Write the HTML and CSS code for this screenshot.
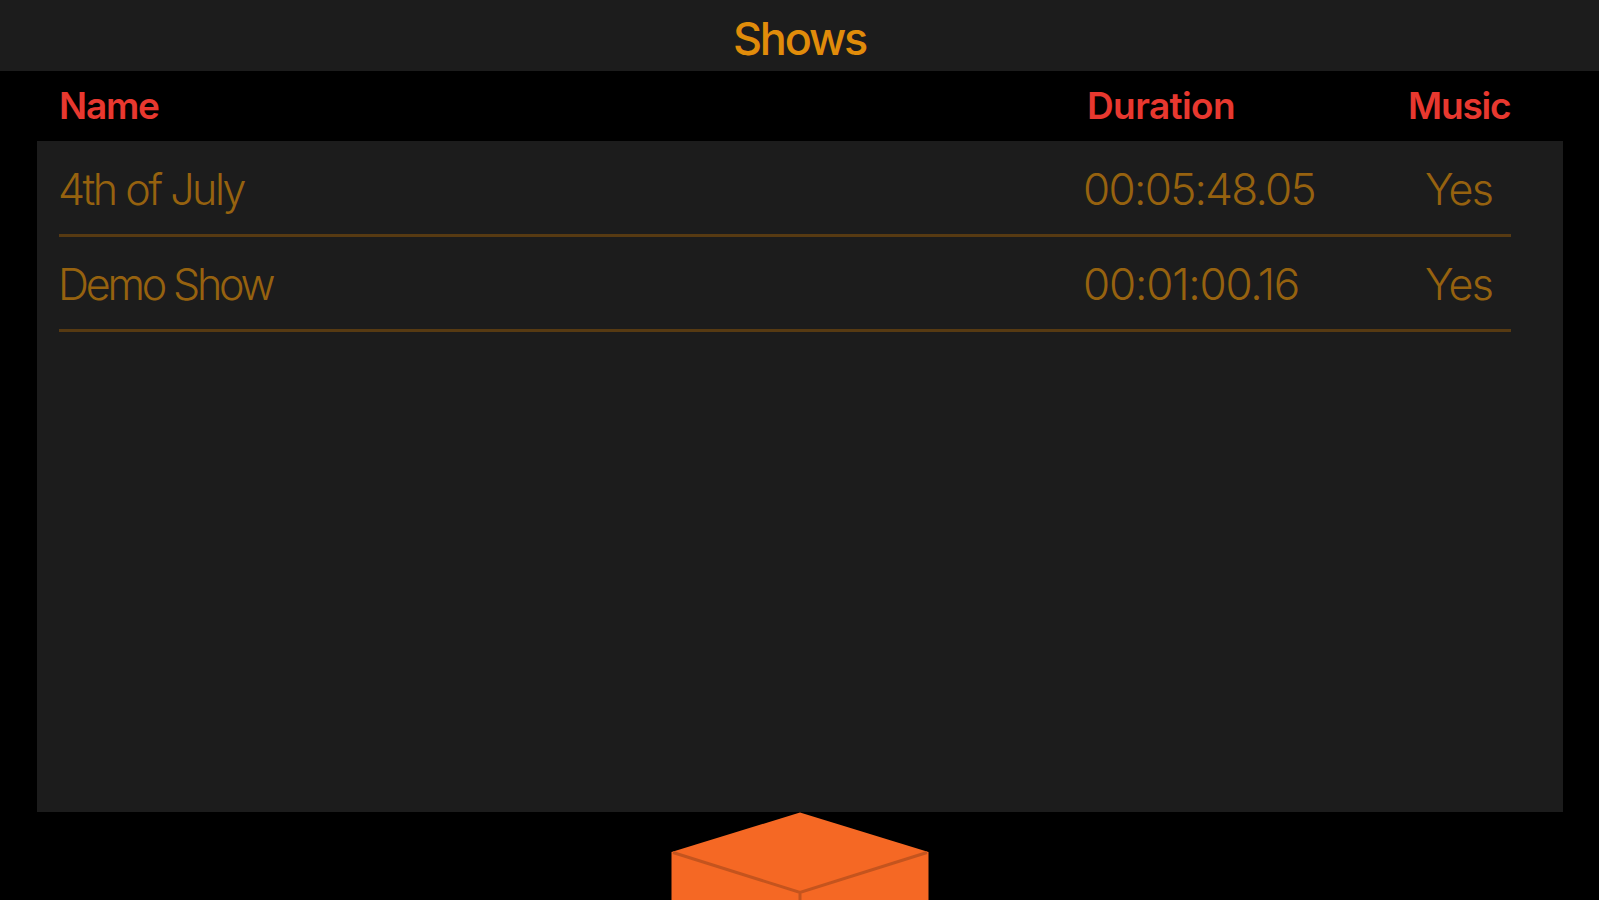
FILE: index.html
```
<!DOCTYPE html>
<html lang="en">
<head>
    <meta charset="UTF-8">
    <meta name="viewport" content="width=device-width, initial-scale=1.0">
    <title>Shows</title>
    <link rel="stylesheet" href="styles.css">
</head>
<body>
    <header class="header">
        <h1>Shows</h1>
    </header>
    <div class="columns">
        <span class="col-name">Name</span>
        <span class="col-duration">Duration</span>
        <span class="col-music">Music</span>
    </div>
    <main class="shows">
        <div class="show">
            <span class="name">4th of July</span>
            <span class="duration">00:05:48.05</span>
            <span class="music">Yes</span>
        </div>
        <div class="show">
            <span class="name">Demo Show</span>
            <span class="duration">00:01:00.16</span>
            <span class="music">Yes</span>
        </div>
    </main>
    <footer class="footer">
        <svg class="cube" width="260" height="88" viewBox="0 0 260 88">
            <path class="cube-body" d="M130 .5L258.5 40V88H1.500V40Z"/>
            <path class="cube-edge" d="M3 40.500L130 80.500L257 40.500M130 80.500V88"/>
        </svg>
    </footer>
</body>
</html>
```

FILE: styles.css
```
* {
    box-sizing: border-box;
}
body {
    margin: 0;
    height: 900px;
    display: flex;
    flex-direction: column;
    overflow: hidden;
    background-color: #000;
    font-family: Inter, "Liberation Sans", sans-serif;
}
.header {
    height: 71px;
    flex: none;
    padding-top: 4px;
    background-color: #1c1c1c;
}
h1 {
    margin: 0;
    text-align: center;
    color: #e18c0a;
    font-size: 45px;
    font-weight: 500;
    line-height: 70px;
    letter-spacing: -2.2px;
}
.columns,
.show {
    display: grid;
    grid-template-columns: 1025px 1fr 102px;
}
.columns {
    height: 70px;
    flex: none;
    margin: 0 89px 0 59px;
    color: #e8382f;
    font-size: 37px;
    font-weight: 600;
    line-height: 70px;
    letter-spacing: -1.2px;
}
.col-duration {
    padding-left: 3px;
    letter-spacing: -0.6px;
}
.shows {
    height: 671px;
    flex: none;
    margin: 0 36px 0 37px;
    padding: 0 52px 0 22px;
    background-color: #1c1c1c;
}
.show {
    height: 95px;
    border-bottom: 3px solid #573a12;
    color: #96620f;
    font-size: 44px;
    font-weight: 300;
    line-height: 94px;
    letter-spacing: -1.8px;
}
.show:first-child {
    height: 96px;
    line-height: 97px;
}
.name {
    margin-left: -1px;
    font-size: 43px;
    letter-spacing: -3.2px;
}
.show:first-child .name {
    letter-spacing: -2.5px;
}
.duration {
    margin-left: -1px;
    letter-spacing: -1.2px;
}
.show:first-child .duration {
    letter-spacing: -1.7px;
}
.music {
    padding-left: 16px;
    font-size: 43px;
}
.footer {
    flex: 1;
    display: flex;
    justify-content: center;
}
.cube-body {
    fill: #f56824;
}
.cube-edge {
    fill: none;
    stroke: #c4541e;
    stroke-width: 3;
}
```
